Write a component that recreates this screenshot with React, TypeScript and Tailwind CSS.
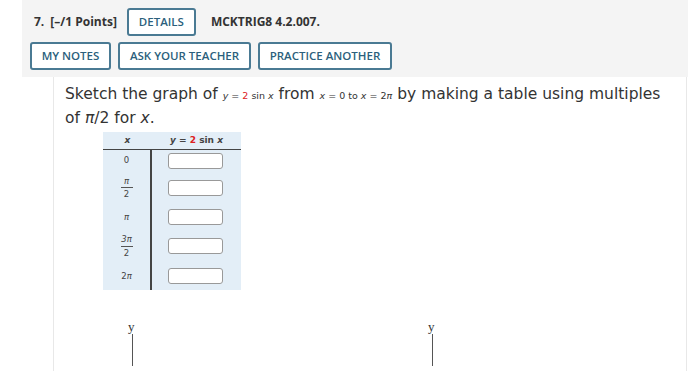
import React from "react";

const hdrFont = { fontFamily: '"Open Sans", "Noto Sans", sans-serif' };

function OutlineButton({ label, className }: { label: string; className?: string }) {
  return (
    <button
      type="button"
      className={`h-[28px] whitespace-nowrap rounded-[3px] border-2 border-[#4a7a93] bg-white px-0 text-[11.5px] font-semibold text-[#2c5f7c] ${className ?? ""}`}
    >
      {label}
    </button>
  );
}

function Frac({ num }: { num: string }) {
  return (
    <span className="inline-flex flex-col items-center leading-none">
      <span className="text-[8.5px] italic">{num}</span>
      <span className="my-[2px] h-px w-[12px] bg-[#555]" />
      <span className="text-[8.5px]">2</span>
    </span>
  );
}

function Box() {
  return <div className="h-[16px] w-[55px] rounded-[3px] border border-[#999] bg-white" />;
}

const rows: { x: React.ReactNode; h: string }[] = [
  { x: <span className="text-[8.5px]">0</span>, h: "h-[21px]" },
  { x: <Frac num="π" />, h: "h-[33px]" },
  { x: <span className="text-[8.5px] italic">π</span>, h: "h-[26px]" },
  { x: <Frac num="3π" />, h: "h-[32px]" },
  { x: <span className="text-[8.5px]">2<i>π</i></span>, h: "h-[28px]" },
];

export default function App() {
  return (
    <div className="relative h-[371px] w-[700px] overflow-hidden bg-white" style={hdrFont}>
      <div className="ml-[22px] mr-[12px] h-[77px] bg-[#f4f4f4] pl-[8px] pt-[8px]">
        <div className="flex h-[27px] items-center">
          <span className="ml-[4px] text-[12px] font-bold text-[#333]">7.</span>
          <span className="ml-[6px] text-[12px] font-bold text-[#333]">[–/1 Points]</span>
          <OutlineButton label="DETAILS" className="ml-[10px] h-[27px] w-[69px]" />
          <span className="ml-[15px] text-[12px] font-bold text-[#333]">MCKTRIG8 4.2.007.</span>
        </div>
        <div className="mt-[7px] flex gap-[7px]">
          <OutlineButton label="MY NOTES" className="w-[81px]" />
          <OutlineButton label="ASK YOUR TEACHER" className="w-[133px]" />
          <OutlineButton label="PRACTICE ANOTHER" className="w-[134px]" />
        </div>
      </div>

      <div
        className="ml-[53px] mr-[13px] h-[300px] border-x border-[#e8e8e8] pl-[11px] pt-[6px]"
        style={{ fontFamily: '"DejaVu Sans", Verdana, sans-serif' }}
      >
        <p className="w-[600px] text-[15.5px] leading-[22px] text-[#333]">
          Sketch the graph of{" "}
          <span className="text-[9.5px]">
            <i>y</i> = <span className="text-[#d22]">2</span> sin <i>x</i>
          </span>{" "}
          from{" "}
          <span className="text-[9.5px]">
            <i>x</i> = 0 to <i>x</i> = 2<i>π</i>
          </span>{" "}
          by making a table using multiples of <i>π</i>/2 for <i>x</i>.
        </p>

        <div className="ml-[38px] mt-[3px] w-[138px] bg-[#e3eef7] text-[#444]">
          <div className="flex h-[18px] items-center border-b border-[#444] text-[9px] font-bold">
            <div className="w-[49px] text-center italic">x</div>
            <div className="flex-1 text-center">
              <i>y</i> = <span className="text-[#d22]">2</span> sin <i>x</i>
            </div>
          </div>
          <div className="flex">
            <div className="w-[49px] border-r-2 border-[#444]">
              {rows.map((r, i) => (
                <div key={i} className={`flex items-center justify-center ${r.h}`}>
                  {r.x}
                </div>
              ))}
            </div>
            <div className="flex-1">
              {rows.map((r, i) => (
                <div key={i} className={`flex items-center pl-[16px] ${r.h}`}>
                  <Box />
                </div>
              ))}
            </div>
          </div>
        </div>
      </div>

      <div className="absolute left-[128px] top-[320px] flex flex-col items-center" style={{ fontFamily: '"Liberation Serif", serif' }}>
        <span className="text-[13px] leading-[14px] text-[#333]">y</span>
        <span className="ml-[3px] h-[32px] w-px bg-[#555]" />
      </div>
      <div className="absolute left-[428px] top-[320px] flex flex-col items-center" style={{ fontFamily: '"Liberation Serif", serif' }}>
        <span className="text-[13px] leading-[14px] text-[#333]">y</span>
        <span className="ml-[3px] h-[32px] w-px bg-[#555]" />
      </div>
    </div>
  );
}
